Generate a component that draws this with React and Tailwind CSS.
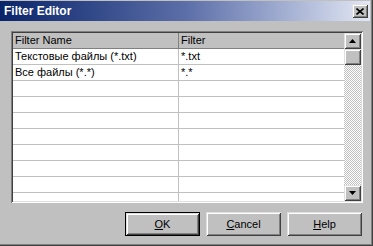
const ROWS = [
  { name: 'Текстовые файлы (*.txt)', filter: '*.txt' },
  { name: 'Все файлы (*.*)', filter: '*.*' },
  {}, {}, {}, {}, {}, {}, {}, {},
]

const raised =
  'shadow-[inset_1px_1px_#e0e0e0,inset_-1px_-1px_#404040,inset_2px_2px_#ffffff,inset_-2px_-2px_#808080]'

function Arrow({ up }) {
  return (
    <svg width="7" height="4" viewBox="0 0 7 4">
      {up ? <path d="M3.5 0L7 4H0z" fill="#000" /> : <path d="M0 0h7L3.5 4z" fill="#000" />}
    </svg>
  )
}

function Button({ label, rest, isDefault }) {
  const btn = (
    <div className={`flex-1 flex items-center justify-center bg-[#c0c0c0] ${raised}`}>
      <span className="text-[11px] text-black">
        <span className="underline">{label}</span>{rest}
      </span>
    </div>
  )
  if (isDefault) {
    return <div className="w-[75px] h-[24px] flex border border-black">{btn}</div>
  }
  return <div className="w-[75px] h-[24px] flex">{btn}</div>
}

export default function App() {
  return (
    <div className="w-[373px] h-[246px] bg-[#c0c0c0] font-['Liberation_Sans',Arial,sans-serif] pt-px pr-[3px] shadow-[inset_-1px_-1px_#404040,inset_-2px_-2px_#808080] select-none">
      {/* Title bar */}
      <div className="h-[20px] flex items-center justify-between pl-[4px] pr-[2px] bg-gradient-to-r from-[#0a246a] via-[#5c6ea8] to-[#e4e8f4]">
        <span className="text-white font-bold text-[12px] leading-none">Filter Editor</span>
        <div className={`w-[16px] h-[14px] bg-[#c0c0c0] flex items-center justify-center ${raised}`}>
          <svg width="8" height="7" viewBox="0 0 8 7">
            <path d="M0.5 0.5L7.5 6.5M7.5 0.5L0.5 6.5" stroke="#000" strokeWidth="1.6" />
          </svg>
        </div>
      </div>

      {/* Grid */}
      <div className="mt-[10px] ml-[11px] w-[352px] h-[172px] p-[2px] shadow-[inset_1px_1px_#808080,inset_-1px_-1px_#ffffff,inset_2px_2px_#404040,inset_-2px_-2px_#dfdfdf]">
        <div className="flex h-full">
          <div className="flex-1 bg-white overflow-hidden text-[11px] text-black">
            <div className="flex h-[16px] bg-[#c0c0c0] border-b border-[#808080]">
              <div className="w-[166px] border-r border-[#808080] pl-[2px] flex items-center">Filter Name</div>
              <div className="flex-1 pl-[2px] flex items-center">Filter</div>
            </div>
            {ROWS.map((r, i) => (
              <div key={i} className="flex h-[16px] border-b border-[#c0c0c0]">
                <div className="w-[166px] border-r border-[#c0c0c0] pl-[2px] flex items-center">{r.name}</div>
                <div className="flex-1 pl-[2px] flex items-center">{r.filter}</div>
              </div>
            ))}
          </div>

          {/* Scrollbar */}
          <div className="w-[17px] flex flex-col bg-[repeating-conic-gradient(#c0c0c0_0_25%,#ffffff_0_50%)] bg-[length:2px_2px]">
            <div className={`h-[16px] bg-[#c0c0c0] flex items-center justify-center ${raised}`}>
              <Arrow up />
            </div>
            <div className={`h-[16px] bg-[#c0c0c0] ${raised}`} />
            <div className="flex-1" />
            <div className={`h-[16px] bg-[#c0c0c0] flex items-center justify-center ${raised}`}>
              <Arrow />
            </div>
          </div>
        </div>
      </div>

      {/* Buttons */}
      <div className="mt-[9px] flex justify-end gap-[6px] pr-[8px]">
        <Button label="O" rest="K" isDefault />
        <Button label="C" rest="ancel" />
        <Button label="H" rest="elp" />
      </div>
    </div>
  )
}
